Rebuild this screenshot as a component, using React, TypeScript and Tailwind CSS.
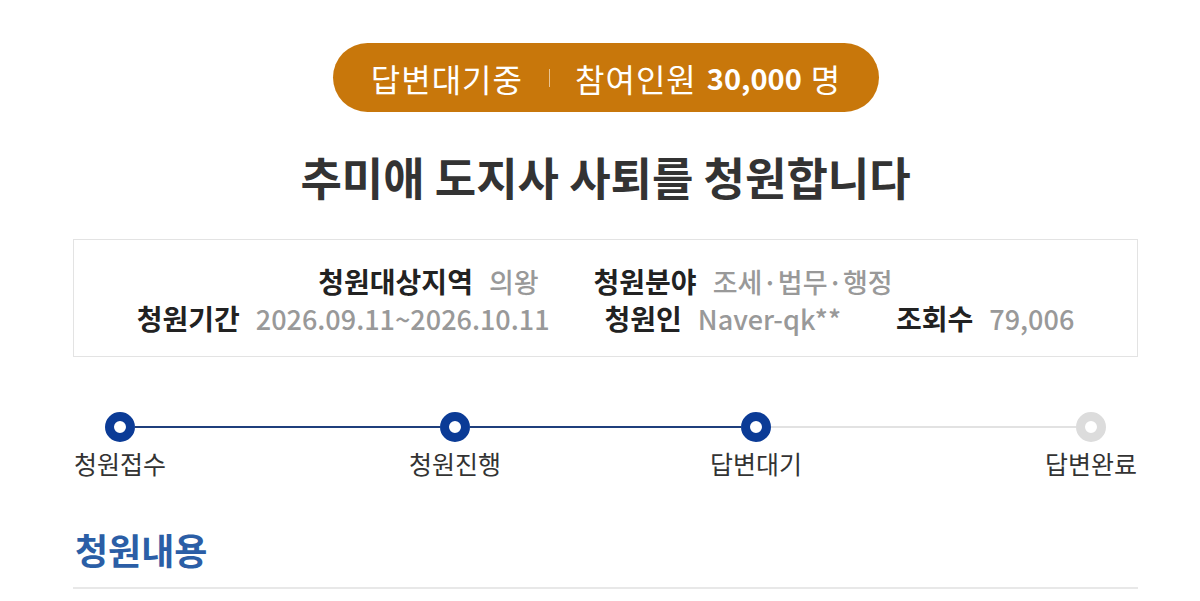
import React from 'react';

const FONT = { fontFamily: '"Noto Sans CJK KR", "Noto Sans", sans-serif' };

const infoRows = [
  [
    { label: '청원대상지역', value: '의왕' },
    { label: '청원분야', value: '조세·법무·행정' },
  ],
  [
    { label: '청원기간', value: '2026.09.11~2026.10.11' },
    { label: '청원인', value: 'Naver-qk**' },
    { label: '조회수', value: '79,006' },
  ],
];

const steps = [
  { label: '청원접수', done: true },
  { label: '청원진행', done: true },
  { label: '답변대기', done: true },
  { label: '답변완료', done: false },
];

// connector widths between step centres (label width 90 + 60 overlap)
const connectors = [
  { width: 'w-[305px]', done: true },
  { width: 'w-[271px]', done: true },
  { width: 'w-[305px]', done: false },
];

function Step({ label, done }: { label: string; done: boolean }) {
  return (
    <div className="relative z-10 flex w-[90px] flex-col items-center">
      <div
        className={
          done
            ? 'h-[30px] w-[30px] rounded-full border-[9px] border-[#0b3b96] bg-white'
            : 'h-[30px] w-[30px] rounded-full border-[9px] border-[#dcdcdc] bg-white'
        }
      />
      <div className="mt-[5px] whitespace-nowrap text-[25px] leading-[32px] text-[#333]">{label}</div>
    </div>
  );
}

export default function App() {
  return (
    <div className="min-h-[601px] bg-white" style={FONT}>
      <div className="ml-[73px] w-[1065px]">
        <div className="flex justify-center pt-[43px]">
          <div className="flex h-[69px] w-[546px] items-center justify-center rounded-full bg-[#c8770b] text-[32px] text-white">
            <span className="tracking-[1px]">답변대기중</span>
            <span className="ml-[26px] mr-[25px] h-[18px] w-px bg-[#e9c493]" />
            <span className="tracking-[1px]">참여인원</span>
            <span className="ml-[10px] text-[29px] font-bold">30,000</span>
            <span className="ml-[9px]">명</span>
          </div>
        </div>

        <h1 className="mt-[38px] text-center text-[45px] font-bold leading-[53px] text-[#333]">
          추미애 도지사 사퇴를 청원합니다
        </h1>

        <div className="mt-[36px] border border-[#e3e3e3] pb-[19px] pt-[23px]">
          {infoRows.map((row, i) => (
            <div key={i} className="flex justify-center gap-[55px] text-[28px] leading-[37px]">
              {row.map((item) => (
                <div key={item.label} className="flex items-baseline gap-[16px] whitespace-nowrap">
                  <span className="font-bold text-[#222]">{item.label}</span>
                  <span className="text-[27px] font-medium text-[#999]">{item.value}</span>
                </div>
              ))}
            </div>
          ))}
        </div>

        <div className="mt-[55px] flex items-start pl-[2px]">
          {steps.map((step, i) => (
            <React.Fragment key={step.label}>
              <Step label={step.label} done={step.done} />
              {i < connectors.length && (
                <div
                  className={
                    connectors[i].width +
                    ' -mx-[30px] mt-[14px] h-[2px] shrink-0 ' +
                    (connectors[i].done ? 'bg-[#1f3f7c]' : 'bg-[#e2e2e2]')
                  }
                />
              )}
            </React.Fragment>
          ))}
        </div>

        <div className="mt-[48px] border-b-2 border-[#e8e8e8] pb-[16px] pl-[2px]">
          <h2 className="text-[36px] font-bold leading-[44px] text-[#2b5ea6]">청원내용</h2>
        </div>
      </div>
    </div>
  );
}
